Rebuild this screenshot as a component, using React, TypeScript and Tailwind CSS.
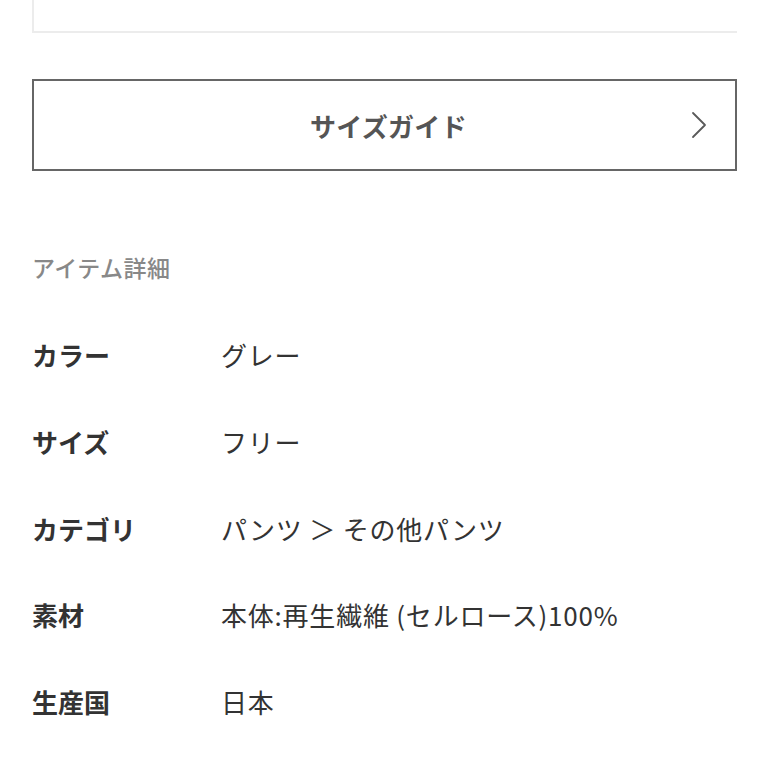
const details = [
  { label: "カラー", value: "グレー" },
  { label: "サイズ", value: "フリー" },
  { label: "カテゴリ", value: "パンツ ＞ その他パンツ" },
  { label: "素材", value: "本体:再生繊維 (セルロース)100%" },
  { label: "生産国", value: "日本" },
];

export default function App() {
  return (
    <div
      className="min-h-[769px] bg-white px-[32px]"
      style={{ fontFamily: '"Noto Sans CJK JP", "Noto Sans", sans-serif' }}
    >
      {/* tail of the card above */}
      <div className="h-[33px] border-b-2 border-l-2 border-[#ececec]" />

      <button className="relative mt-[46px] flex h-[92px] w-full items-center justify-center border-2 border-[#666] bg-white pl-[8px]">
        <span className="text-[26px] font-bold tracking-[0.01em] text-[#555]">サイズガイド</span>
        <svg
          className="absolute right-[28px] top-1/2 -translate-y-1/2"
          width="16"
          height="28"
          viewBox="0 0 16 28"
          fill="none"
          stroke="#5a5a5a"
          strokeWidth="1.8"
          strokeLinecap="round"
          strokeLinejoin="round"
        >
          <polyline points="2 2 14 14 2 26" />
        </svg>
      </button>

      <h2 className="mt-[79px] text-[23px] font-medium leading-[34px] tracking-[0.02em] text-[#888]">アイテム詳細</h2>

      <dl className="mt-[51px] flex flex-col gap-[47.75px]">
        {details.map((d) => (
          <div key={d.label} className="flex items-center leading-[39px]">
            <dt className="w-[189px] shrink-0 text-[26px] font-bold text-[#333]">{d.label}</dt>
            <dd className="text-[26px] tracking-[0.03em] text-[#333]">{d.value}</dd>
          </div>
        ))}
      </dl>
    </div>
  );
}
